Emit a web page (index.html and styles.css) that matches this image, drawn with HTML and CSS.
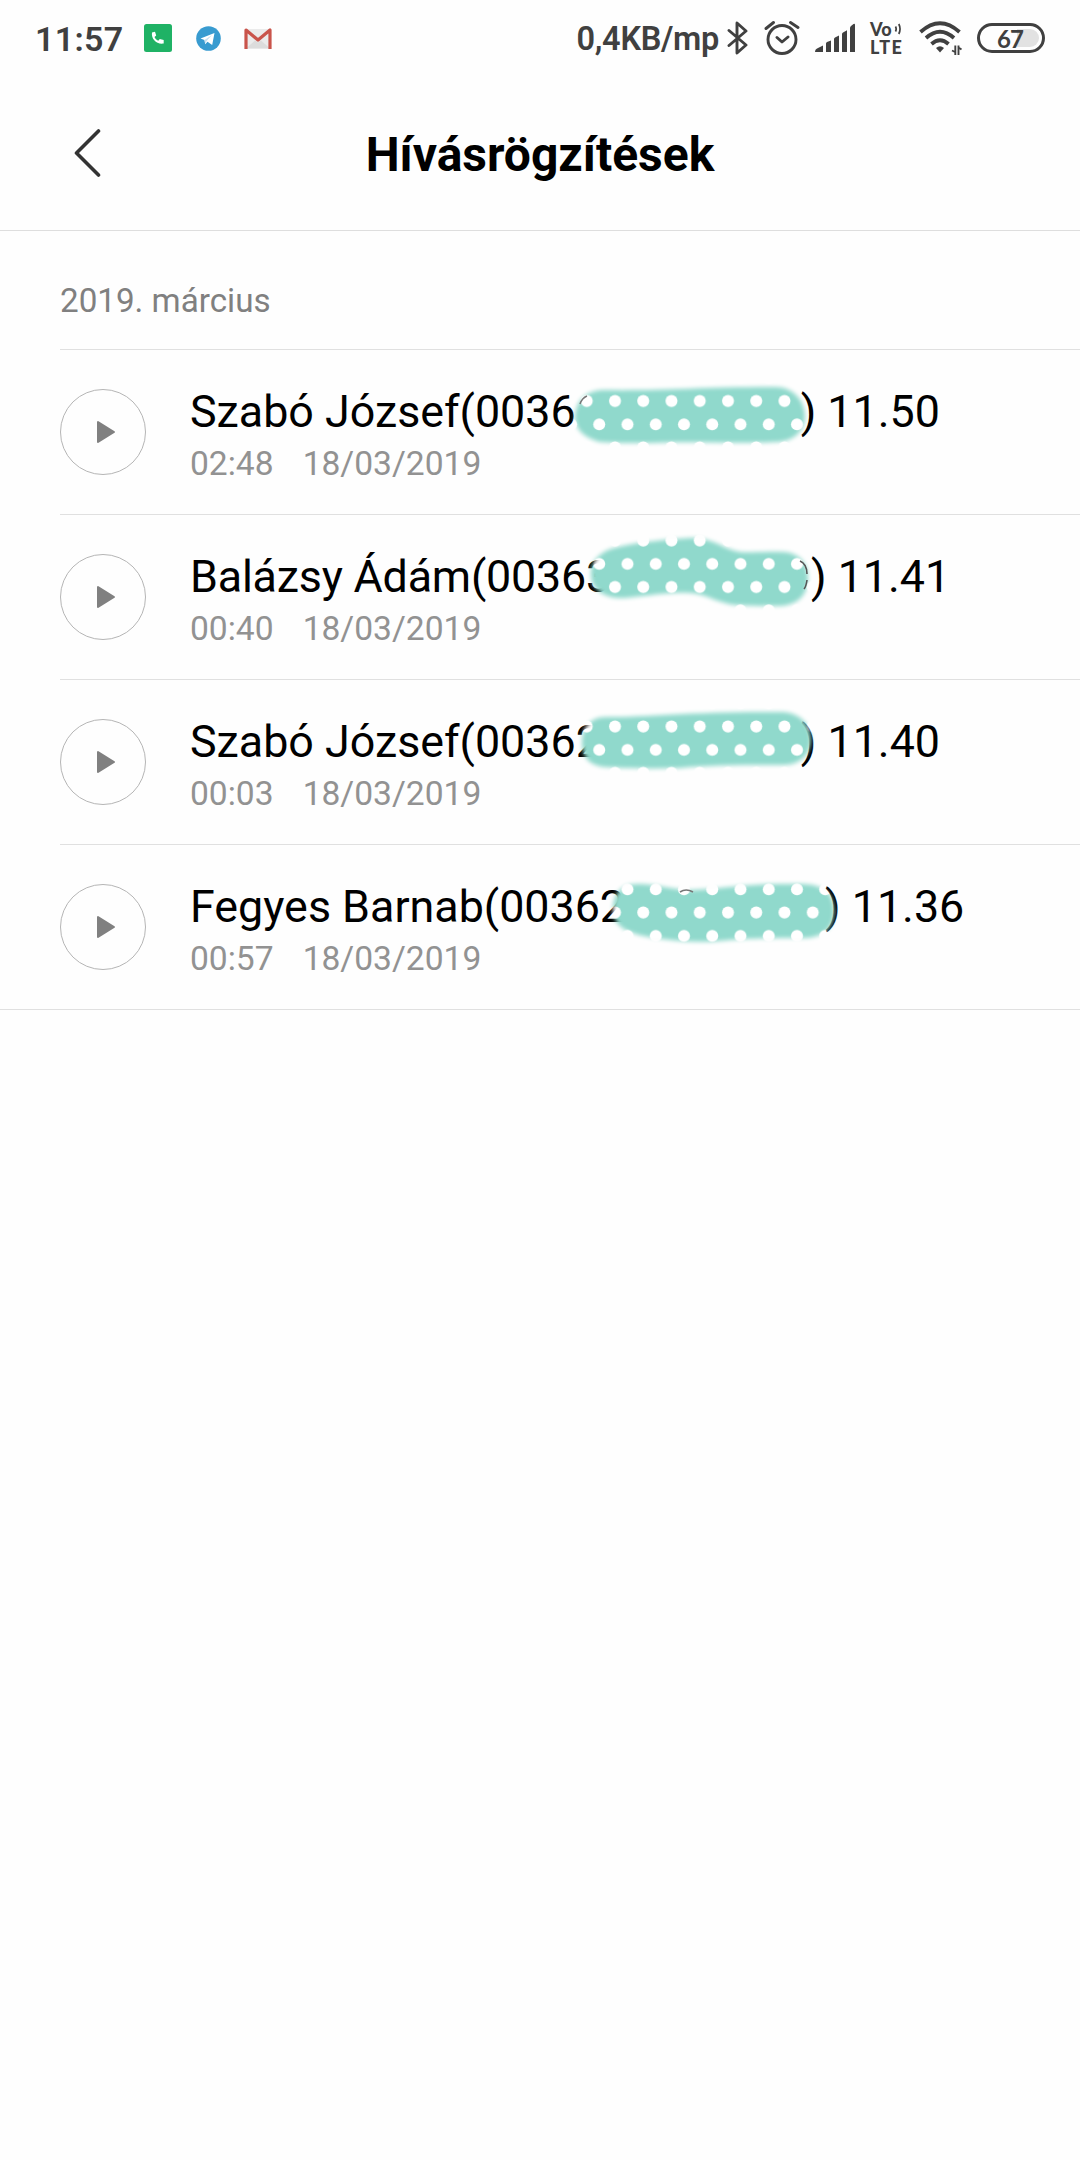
FILE: index.html
```html
<!DOCTYPE html>
<html lang="hu">

<head>
    <meta charset="UTF-8">
    <meta name="viewport" content="width=device-width, initial-scale=1.0">
    <title>Hívásrögzítések</title>
    <link rel="stylesheet" href="styles.css">
</head>

<body>

    <div class="status-bar">
        <span class="clock">11:57</span>
        <svg class="icon-phone" width="28" height="28" viewBox="0 0 28 28">
            <rect width="28" height="28" rx="2.5" fill="#1fb265"/>
            <path d="M8 8.600l3-.8 1.200 3.800-1.700 1.500c.8 1.700 2 2.900 3.700 3.700l1.600-1.700 3.900 1v3.500c-7 1.200-12.700-4.500-11.700-11z" fill="#fff"/>
        </svg>
        <svg class="icon-telegram" width="25" height="25" viewBox="0 0 25 25">
            <circle cx="12.500" cy="12.500" r="12.300" fill="#389bd0"/>
            <path d="M4.500 12.500L18.500 7l-2.300 12-4.700-3.300-2.300 2.500-.8-4.200z" fill="#fff"/>
            <path d="M8.500 14l7.500-5-5.500 6-1 3z" fill="#c9dff0"/>
        </svg>
        <svg class="icon-mail" width="28" height="21" viewBox="0 0 28 21">
            <rect x="1" y="1" width="26" height="19.500" rx="1" fill="#ebebeb"/>
            <path d="M2 20.500l9-8 3 2 3-2 9 8z" fill="#dcdcdc"/>
            <path d="M2 21V2l12 10L26 2v19" fill="none" stroke="#c9544b" stroke-width="3.200" stroke-linejoin="round"/>
        </svg>

        <span class="speed">0,4KB/mp</span>
        <svg class="icon-bluetooth" width="22" height="34" viewBox="0 0 22 34">
            <path d="M2 9.500L19 24l-9 8V2l9 8L2 24.500" fill="none" stroke="#404040" stroke-width="2.900" stroke-linejoin="round" stroke-linecap="round"/>
        </svg>
        <svg class="icon-alarm" width="36" height="36" viewBox="0 0 36 36">
            <g fill="none" stroke="#404040" stroke-width="2.900" stroke-linecap="round" stroke-linejoin="round">
                <circle cx="18" cy="19.500" r="14"/>
                <path d="M13 17.500l5 4.500 6-5M2 8.500l7.500-6M34 7.500l-7.500-5"/>
            </g>
        </svg>
        <svg class="icon-signal" width="41" height="30" viewBox="0 0 41 30">
            <path d="M0 29q0-3 3-4l5-2.500V29zM11 29V20.500q0-1 1-1.500l4-1.500V29zM19 29V16q0-1 1-1.500l4-2V29zM27 29V11q0-1 1-1.500l4-2.300V29zM35 29V5q0-1.200 1-2l2.500-2q1.500-1 1.500 1v27z" fill="#404040"/>
        </svg>
        <div class="volte">
            <div class="volte-top">Vo<svg width="8" height="12" viewBox="0 0 8 12"><path d="M1.500 3.500q1.300 2.500 0 5M4.800 1q2.500 5 0 10" fill="none" stroke="#404040" stroke-width="1.700"/></svg></div>
            <div class="volte-bottom">LTE</div>
        </div>
        <svg class="icon-wifi" width="44" height="34" viewBox="0 0 44 34">
            <g fill="none" stroke="#404040" stroke-width="3.800">
                <path d="M1.500 11q19.500-17.500 39 0"/>
                <path d="M7 17q14-12.500 28 0"/>
                <path d="M12.500 23q8.500-7.500 17 0"/>
            </g>
            <path d="M17 27q4-3.500 8 0L21 31.500z" fill="#404040"/>
            <path d="M33 29.500l3 1.500M36.300 24.500v9.500M39.500 34v-9.500M39.500 26.500l3 2" fill="none" stroke="#404040" stroke-width="1.900"/>
        </svg>
        <div class="battery">
            <div class="battery-level">67</div>
        </div>
    </div>

    <div class="header">
        <svg class="back" width="28" height="50" viewBox="0 0 28 50">
            <path d="M24.500 3L2.500 25l22 22" fill="none" stroke="#333" stroke-width="3.600" stroke-linecap="round" stroke-linejoin="round"/>
        </svg>
        <h1>Hívásrögzítések</h1>
    </div>

    <div class="month">2019. március</div>

    <div class="list">
        <div class="item">
            <div class="play"><svg width="20" height="24" viewBox="0 0 20 24"><path d="M2 2v20l16-10z"/></svg></div>
            <div class="item-body">
                <div class="name"><span>Szabó József(0036</span><span class="number nine"></span><span>) 11.50</span></div>
                <div class="info"><span>02:48</span><span>18/03/2019</span></div>
            </div>
            <svg class="cover" viewBox="560 350 290 164">
                <defs>
                    <pattern id="dots" x="606" y="389.500" width="28.250" height="46.500" patternUnits="userSpaceOnUse">
                        <rect width="28.250" height="46.500" fill="#90d9cc"/>
                        <circle cx="9" cy="11.500" r="6" fill="#fff"/>
                        <circle cx="21.500" cy="34.900" r="6" fill="#fff"/>
                    </pattern>
                    <filter id="soft" x="-10%" y="-30%" width="120%" height="160%">
                        <feGaussianBlur stdDeviation="2"/>
                    </filter>
                    <mask id="shape1" maskUnits="userSpaceOnUse" x="560" y="350" width="290" height="164">
                        <path filter="url(#soft)" fill="#fff" d="M575 417C576 399 588 390 604 390C660 391 700 387 775 387C793 387 805 400 805 417C804 432 793 442 775 442C740 444 690 441 650 443C630 443 612 443 600 442C585 438 575 430 575 417Z"/>
                    </mask>
                </defs>
                <rect x="560" y="350" width="290" height="164" fill="url(#dots)" mask="url(#shape1)"/>
                <path d="M580 404q2-6 7-8" fill="none" stroke="#777" stroke-width="1.500"/>
            </svg>
        </div>

        <div class="item">
            <div class="play"><svg width="20" height="24" viewBox="0 0 20 24"><path d="M2 2v20l16-10z"/></svg></div>
            <div class="item-body">
                <div class="name"><span class="tight">Balázsy Ádám(00363</span><span class="number eight"></span><span>) 11.41</span></div>
                <div class="info"><span>00:40</span><span>18/03/2019</span></div>
            </div>
            <svg class="cover" viewBox="560 515 290 164">
                <mask id="shape2" maskUnits="userSpaceOnUse" x="560" y="515" width="290" height="164">
                    <path filter="url(#soft)" fill="#fff" d="M591 574C591 560 602 550 618 547C640 542 660 540 690 538C716 538 722 549 740 552C752 553 765 551 784 552C799 553 808 563 808 578C808 595 798 605 780 606C765 606 752 606 735 605C714 602 707 594 690 593C670 592 655 595 625 598C605 599 591 590 591 574Z"/>
                </mask>
                <rect x="560" y="515" width="290" height="164" fill="url(#dots)" mask="url(#shape2)"/>
                <path d="M800 561q7 3 7 13M807 580q-1 7-3 9" fill="none" stroke="#555" stroke-width="1.600"/>
            </svg>
        </div>

        <div class="item">
            <div class="play"><svg width="20" height="24" viewBox="0 0 20 24"><path d="M2 2v20l16-10z"/></svg></div>
            <div class="item-body">
                <div class="name"><span>Szabó József(00362</span><span class="number eight"></span><span>) 11.40</span></div>
                <div class="info"><span>00:03</span><span>18/03/2019</span></div>
            </div>
            <svg class="cover" viewBox="560 680 290 164">
                <mask id="shape3" maskUnits="userSpaceOnUse" x="560" y="680" width="290" height="164">
                    <path filter="url(#soft)" fill="#fff" d="M582 742C582 728 590 717 606 717C650 717 700 711 782 712C800 713 811 724 811 740C810 756 799 765 783 765C740 765 710 765 680 768C650 769 620 768 604 767C588 765 582 756 582 742Z"/>
                </mask>
                <rect x="560" y="680" width="290" height="164" fill="url(#dots)" mask="url(#shape3)"/>
            </svg>
        </div>

        <div class="item">
            <div class="play"><svg width="20" height="24" viewBox="0 0 20 24"><path d="M2 2v20l16-10z"/></svg></div>
            <div class="item-body">
                <div class="name"><span>Fegyes Barnab(00362</span><span class="number eight"></span><span>) 11.36</span></div>
                <div class="info"><span>00:57</span><span>18/03/2019</span></div>
            </div>
            <svg class="cover" viewBox="560 845 290 164">
                <mask id="shape4" maskUnits="userSpaceOnUse" x="560" y="845" width="290" height="164">
                    <path filter="url(#soft)" fill="#fff" d="M613 910C613 896 619 884 638 884C658 884 670 890 692 890C720 889 750 883 800 884C822 884 834 892 834 911C834 928 824 937 806 938C780 938 750 938 730 940C705 943 680 942 655 938C635 935 613 930 613 910Z"/>
                </mask>
                <rect x="560" y="845" width="290" height="164" fill="url(#dots)" mask="url(#shape4)"/>
                <path d="M680 892q6-4 13 0" fill="none" stroke="#777" stroke-width="1.600"/>
            </svg>
        </div>
    </div>

</body>

</html>
```

FILE: styles.css
```css
* {
    box-sizing: border-box;
}

body {
    margin: 0;
    background-color: #fefefe;
    font-family: Roboto, "Noto Sans", sans-serif;
    color: #000;
}

svg {
    display: block;
    flex-shrink: 0;
}

.status-bar {
    display: flex;
    align-items: center;
    height: 76px;
    padding: 0 35px;
    color: #404040;
}

.clock {
    width: 109px;
    padding-top: 2px;
    font-size: 34px;
    font-weight: 600;
    letter-spacing: 0.3px;
    white-space: nowrap;
}

.icon-telegram {
    margin-left: 24px;
}

.icon-mail {
    margin-left: 23px;
}

.speed {
    margin-left: auto;
    padding-top: 2px;
    font-size: 32.5px;
    font-weight: 600;
    letter-spacing: -0.3px;
}

.icon-bluetooth {
    margin-left: 8px;
}

.icon-alarm {
    margin-left: 15px;
}

.icon-signal {
    margin-left: 15px;
}

.volte {
    width: 34px;
    margin-left: 14px;
    font-family: Lato, sans-serif;
    font-size: 18px;
    font-weight: 900;
    line-height: 18px;
}

.volte-top {
    display: flex;
    align-items: center;
    height: 17px;
}

.volte-top svg {
    margin-left: 2px;
}

.volte-bottom {
    letter-spacing: 1.4px;
}

.icon-wifi {
    margin-left: 15px;
}

.battery {
    width: 68px;
    height: 30px;
    margin-left: 14px;
    padding: 3px;
    border: 3px solid #404040;
    border-radius: 15px;
}

.battery-level {
    height: 18px;
    padding-right: 2px;
    border-radius: 9px;
    background: linear-gradient(to right, #fefefe 60%, #e2e2e2 60%);
    font-family: Lato, sans-serif;
    font-size: 24px;
    font-weight: 700;
    line-height: 19px;
    letter-spacing: -1px;
    text-align: center;
}

.header {
    display: flex;
    align-items: center;
    height: 155px;
    padding: 0 74px;
    border-bottom: 1px solid #dedede;
}

h1 {
    flex: 1;
    margin: 0 28px 0 0;
    padding-top: 3px;
    font-size: 48px;
    font-weight: 700;
    text-align: center;
}

.month {
    height: 119px;
    margin-left: 60px;
    border-bottom: 1px solid #e0e0e0;
    color: #808080;
    font-size: 33.2px;
    line-height: 139px;
}

.list {
    border-bottom: 1px solid #e0e0e0;
}

.item {
    position: relative;
    display: flex;
    align-items: center;
    height: 165px;
    margin-left: 60px;
    border-bottom: 1px solid #e0e0e0;
}

.item:last-child {
    height: 164px;
    border-bottom: none;
}

.play {
    display: flex;
    align-items: center;
    justify-content: center;
    width: 86px;
    height: 86px;
    padding-left: 5px;
    border: 1px solid #b5b5b5;
    border-radius: 50%;
}

.play path {
    fill: #808080;
    stroke: #808080;
    stroke-width: 2px;
    stroke-linejoin: round;
}

.item-body {
    margin-left: 44px;
    padding-top: 10px;
}

.name {
    display: flex;
    font-size: 44.8px;
    line-height: 54px;
    white-space: pre;
}

.tight {
    letter-spacing: -0.2px;
}

/* room for the digits under the cover */
.number.nine {
    width: 225px;
}

.number.eight {
    width: 200px;
}

.info {
    display: flex;
    gap: 29px;
    color: #929292;
    font-size: 33.6px;
    line-height: 50px;
}

.cover {
    position: absolute;
    top: 0;
    left: 500px;
    width: 290px;
    height: 164px;
}
```
